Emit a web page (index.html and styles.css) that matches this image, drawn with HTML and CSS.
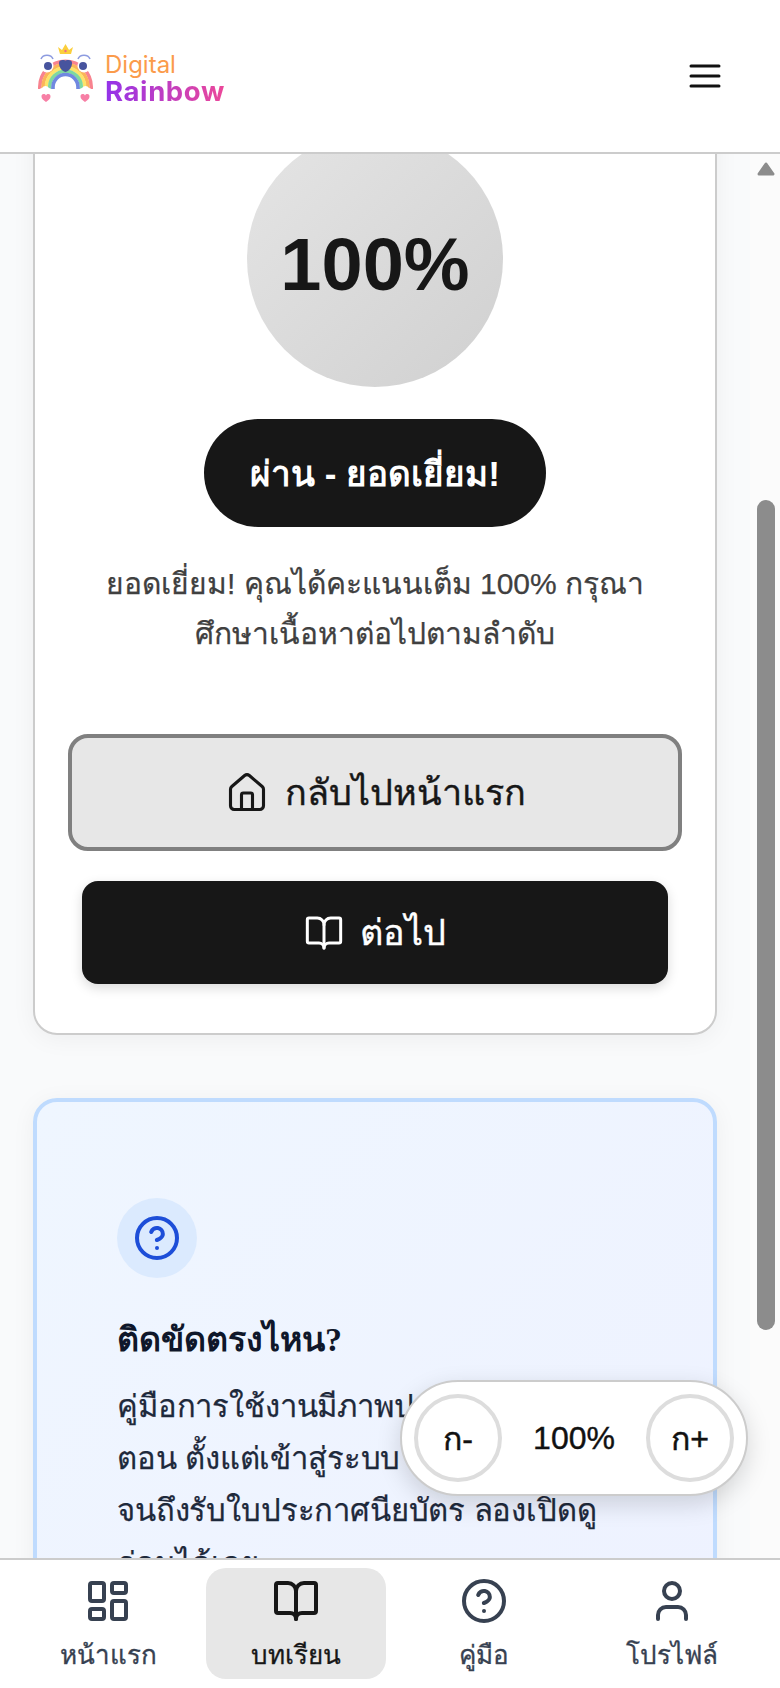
FILE: index.html
```html
<!DOCTYPE html>
<html lang="th">
<head>
    <meta charset="UTF-8">
    <meta name="viewport" content="width=device-width, initial-scale=1.0">
    <title>Digital Rainbow</title>
    <link rel="stylesheet" href="styles.css">
</head>
<body>
    <header class="topbar">
        <div class="logo">
            <svg class="logo-mark" width="56" height="60" viewBox="0 0 56 60">
                <path d="M22 11l-2-7 4 3 3.500-6 3.500 6 4-3-2 7z" fill="#fbcf3c"/>
                <circle cx="27.500" cy="8" r="1.200" fill="#ef6a8a"/>
                <g fill="none" stroke-width="3.600">
                    <path d="M1.800 46v-2a25.700 25.700 0 0 1 51.400 0v2" stroke="#f8838f"/>
                    <path d="M5.100 46v-2a22.400 22.400 0 0 1 44.800 0v2" stroke="#fbb45a"/>
                    <path d="M8.400 46v-2a19.100 19.100 0 0 1 38.200 0v2" stroke="#fde36a"/>
                    <path d="M11.700 46v-2a15.800 15.800 0 0 1 31.600 0v2" stroke="#7fd8a0"/>
                    <path d="M15 46v-2a12.500 12.500 0 0 1 25 0v2" stroke="#7088e0"/>
                </g>
                <path d="M27.500 29c-4-1-6.500-5-6.500-9 0-3 3-3.500 6.500-2.500 3.500-1 6.500-.5 6.500 2.500 0 4-2.500 8-6.500 9z" fill="#47549e"/>
                <circle cx="9" cy="23" r="6.500" fill="#fff"/>
                <circle cx="10" cy="23" r="4" fill="#47549e"/>
                <circle cx="46" cy="23" r="6.500" fill="#fff"/>
                <circle cx="45" cy="23" r="4" fill="#47549e"/>
                <path d="M3 16c2-5 10-5 12 0M40 16c2-5 10-5 12 0" fill="none" stroke="#8d9be0" stroke-width="1.600"/>
                <path d="M1 50a3.500 3.500 0 0 1 3-5 4 4 0 0 1 7 0 3 3 0 0 1 2 5zM42 50a3 3 0 0 1 2-5 4 4 0 0 1 7 0 3.500 3.500 0 0 1 3 5z" fill="#fff"/>
                <path d="M8 59c-3-2-4.500-3.500-4.500-5.500 0-3 3.500-3 4.500-1 1-2 4.500-2 4.500 1 0 2-1.500 3.500-4.500 5.500zM47 59c-3-2-4.500-3.500-4.500-5.500 0-3 3.500-3 4.500-1 1-2 4.500-2 4.500 1 0 2-1.500 3.500-4.500 5.500z" fill="#f77fa5"/>
            </svg>
            <div class="logo-text">
                <span class="logo-top">Digital</span>
                <span class="logo-bottom">Rainbow</span>
            </div>
        </div>
        <svg class="menu-icon" width="32" height="28" viewBox="0 0 32 28">
            <path d="M2 4h28M2 14h28M2 24h28" stroke="#111" stroke-width="3" stroke-linecap="round"/>
        </svg>
    </header>

    <div class="body-row">
        <main class="content">
            <section class="card result-card">
                <div class="score-circle">100%</div>
                <div class="status-pill">ผ่าน - ยอดเยี่ยม!</div>
                <p class="result-text">ยอดเยี่ยม! คุณได้คะแนนเต็ม 100% กรุณา<br>ศึกษาเนื้อหาต่อไปตามลำดับ</p>
                <a class="btn btn-home">
                    <svg width="44" height="44" viewBox="0 0 24 24" fill="none" stroke="currentColor" stroke-width="1.700" stroke-linecap="round" stroke-linejoin="round"><path d="M15 21v-8a1 1 0 0 0-1-1h-4a1 1 0 0 0-1 1v8"/><path d="M3 10a2 2 0 0 1 .709-1.528l7-5.999a2 2 0 0 1 2.582 0l7 5.999A2 2 0 0 1 21 10v9a2 2 0 0 1-2 2H5a2 2 0 0 1-2-2z"/></svg>
                    กลับไปหน้าแรก
                </a>
                <a class="btn btn-next">
                    <svg width="40" height="40" viewBox="0 0 24 24" fill="none" stroke="currentColor" stroke-width="1.800" stroke-linecap="round" stroke-linejoin="round"><path d="M12 7v14"/><path d="M3 18a1 1 0 0 1-1-1V4a1 1 0 0 1 1-1h5a4 4 0 0 1 4 4 4 4 0 0 1 4-4h5a1 1 0 0 1 1 1v13a1 1 0 0 1-1 1h-6a3 3 0 0 0-3 3 3 3 0 0 0-3-3z"/></svg>
                    ต่อไป
                </a>
            </section>

            <section class="card help-card">
                <div class="help-icon">
                    <svg width="48" height="48" viewBox="0 0 24 24" fill="none" stroke="currentColor" stroke-width="2" stroke-linecap="round" stroke-linejoin="round"><circle cx="12" cy="12" r="10"/><path d="M9.090 9a3 3 0 0 1 5.830 1c0 2-3 3-3 3"/><path d="M12 17h.01"/></svg>
                </div>
                <h3 class="help-title">ติดขัดตรงไหน?</h3>
                <p class="help-text">คู่มือการใช้งานมีภาพประกอบทุกขั้น<br>ตอน ตั้งแต่เข้าสู่ระบบ เรียน ทำแบบทดสอบ<br>จนถึงรับใบประกาศนียบัตร ลองเปิดดู<br>ก่อนได้เลย</p>
            </section>
        </main>

        <div class="scrollbar">
            <svg class="scroll-arrow" width="20" height="16" viewBox="0 0 20 16"><path d="M10 3L17 13H3z" fill="#8c8c8c" stroke="#8c8c8c" stroke-width="3" stroke-linejoin="round"/></svg>
            <span class="scroll-thumb"></span>
        </div>

        <div class="zoom-control">
            <button class="zoom-btn">ก-</button>
            <span class="zoom-value">100%</span>
            <button class="zoom-btn">ก+</button>
        </div>
    </div>

    <nav class="bottom-nav">
        <a class="nav-item">
            <svg width="48" height="48" viewBox="0 0 24 24" fill="none" stroke="currentColor" stroke-width="2" stroke-linejoin="round"><rect x="3" y="3" width="7" height="9" rx="1"/><rect x="14" y="3" width="7" height="5" rx="1"/><rect x="14" y="12" width="7" height="9" rx="1"/><rect x="3" y="16" width="7" height="5" rx="1"/></svg>
            <span>หน้าแรก</span>
        </a>
        <a class="nav-item active">
            <svg width="48" height="48" viewBox="0 0 24 24" fill="none" stroke="currentColor" stroke-width="2" stroke-linecap="round" stroke-linejoin="round"><path d="M12 7v14"/><path d="M3 18a1 1 0 0 1-1-1V4a1 1 0 0 1 1-1h5a4 4 0 0 1 4 4 4 4 0 0 1 4-4h5a1 1 0 0 1 1 1v13a1 1 0 0 1-1 1h-6a3 3 0 0 0-3 3 3 3 0 0 0-3-3z"/></svg>
            <span>บทเรียน</span>
        </a>
        <a class="nav-item">
            <svg width="48" height="48" viewBox="0 0 24 24" fill="none" stroke="currentColor" stroke-width="2" stroke-linecap="round" stroke-linejoin="round"><circle cx="12" cy="12" r="10"/><path d="M9.090 9a3 3 0 0 1 5.830 1c0 2-3 3-3 3"/><path d="M12 17h.01"/></svg>
            <span>คู่มือ</span>
        </a>
        <a class="nav-item">
            <svg width="48" height="48" viewBox="0 0 24 24" fill="none" stroke="currentColor" stroke-width="2" stroke-linecap="round" stroke-linejoin="round"><path d="M19 21v-2a4 4 0 0 0-4-4H9a4 4 0 0 0-4 4v2"/><circle cx="12" cy="7" r="4"/></svg>
            <span>โปรไฟล์</span>
        </a>
    </nav>
</body>
</html>
```

FILE: styles.css
```css
* {
    box-sizing: border-box;
}
html, body {
    margin: 0;
    height: 100%;
}
body {
    width: 780px;
    height: 1688px;
    display: flex;
    flex-direction: column;
    overflow: hidden;
    font-family: "Liberation Sans", sans-serif;
    background-color: #f9fafb;
    color: #171717;
}

.topbar {
    height: 154px;
    flex: none;
    display: flex;
    align-items: center;
    justify-content: space-between;
    padding: 0 59px 0 38px;
    background: #fff;
    border-bottom: 2px solid #ccc;
    position: relative;
    z-index: 2;
}
.logo {
    display: flex;
    align-items: center;
    gap: 11px;
    margin-top: -3px;
}
.logo-mark {
    margin-top: -4px;
}
.logo-text {
    display: flex;
    flex-direction: column;
    font-family: Inter, sans-serif;
    font-size: 24px;
    line-height: 26px;
    padding-top: 6px;
}
.logo-top {
    color: #fb9b4b;
}
.logo-bottom {
    font-size: 27.500px;
    font-weight: 700;
    letter-spacing: 0.6px;
    background: linear-gradient(90deg, #9333ea, #ec4899);
    -webkit-background-clip: text;
    background-clip: text;
    color: transparent;
}

.body-row {
    flex: 1;
    min-height: 0;
    display: flex;
    position: relative;
}
.content {
    flex: 1;
    min-width: 0;
    overflow: hidden;
    padding: 0 0 0 33px;
}
.scrollbar {
    width: 30px;
    flex: none;
    background: #fbfbfb;
    display: flex;
    flex-direction: column;
    align-items: center;
    padding: 7px 0 0 2px;
}
.scroll-thumb {
    width: 18px;
    height: 830px;
    margin-top: 323px;
    border-radius: 9px;
    background: #8c8c8c;
}

.card {
    width: 684px;
    border-radius: 24px;
    box-shadow: 0 4px 24px rgba(0, 0, 0, 0.05);
}
.result-card {
    margin-top: -186px;
    padding: 162px 35px 49px;
    background: #fff;
    border: 2px solid #ccc;
    border-top-width: 1px;
    display: flex;
    flex-direction: column;
    align-items: center;
}
.score-circle {
    width: 256px;
    height: 256px;
    flex: none;
    border-radius: 50%;
    display: flex;
    align-items: center;
    justify-content: center;
    padding-top: 10px;
    background: linear-gradient(135deg, #e5e5e5, #d0d0d0);
    font-size: 74px;
    font-weight: 700;
    color: #171717;
}
.status-pill {
    margin-top: 32px;
    width: 342px;
    height: 108px;
    border-radius: 54px;
    display: flex;
    align-items: center;
    justify-content: center;
    background: #171717;
    color: #fff;
    font-size: 35px;
    font-weight: 700;
}
.result-text {
    margin: 32px 0 0;
    font-size: 30px;
    line-height: 50px;
    text-align: center;
    color: #404040;
    -webkit-text-stroke: 0.25px currentColor;
}
.btn {
    display: flex;
    align-items: center;
    justify-content: center;
    gap: 16px;
    font-size: 36px;
    font-weight: 500;
    -webkit-text-stroke: 0.4px currentColor;
}
.btn-home {
    margin-top: 75px;
    width: 614px;
    height: 117px;
    border: 4px solid #808080;
    border-radius: 20px;
    background: #e7e7e7;
    color: #171717;
}
.btn-next {
    margin-top: 30px;
    width: 586px;
    height: 103px;
    border-radius: 16px;
    background: #171717;
    color: #fff;
    box-shadow: 0 4px 12px rgba(0, 0, 0, 0.15);
}

.help-card {
    margin-top: 63px;
    padding: 96px 80px 40px;
    border: 4px solid #bfdbfe;
    background: linear-gradient(135deg, #eff6ff, #eef2ff);
}
.help-icon {
    width: 80px;
    height: 80px;
    border-radius: 50%;
    display: flex;
    align-items: center;
    justify-content: center;
    background: #dbeafe;
    color: #1d4ed8;
}
.help-title {
    margin: 37px 0 0;
    font-family: "Liberation Serif", serif;
    font-size: 34px;
    line-height: 50px;
    font-weight: 700;
    color: #0f172a;
}
.help-text {
    margin: 16px 0 0;
    font-size: 31px;
    letter-spacing: -0.15px;
    line-height: 52.200px;
    white-space: nowrap;
    color: #1e293b;
    -webkit-text-stroke: 0.25px currentColor;
}

.zoom-control {
    position: absolute;
    left: 400px;
    top: 1226px;
    width: 348px;
    height: 116px;
    display: flex;
    align-items: center;
    justify-content: space-between;
    padding: 0 12px;
    border: 2px solid #ccc;
    border-radius: 58px;
    background: #fff;
    box-shadow: 0 8px 24px rgba(0, 0, 0, 0.15);
}
.zoom-btn {
    width: 88px;
    height: 88px;
    border: 4px solid #ddd;
    border-radius: 50%;
    background: #fff;
    font-family: inherit;
    font-size: 32px;
    font-weight: 500;
    color: #111;
    padding: 0;
    -webkit-text-stroke: 0.5px currentColor;
}
.zoom-value {
    font-size: 32px;
    font-weight: 500;
    color: #111;
    -webkit-text-stroke: 0.4px currentColor;
}

.bottom-nav {
    height: 130px;
    flex: none;
    display: flex;
    gap: 8px;
    padding: 8px 18px 9px;
    background: #fff;
    border-top: 2px solid #ccc;
    position: relative;
    z-index: 2;
}
.nav-item {
    flex: 1;
    display: flex;
    flex-direction: column;
    align-items: center;
    justify-content: center;
    gap: 12px;
    padding-top: 2px;
    border-radius: 20px;
    color: #374151;
    font-size: 26px;
    font-weight: 500;
    line-height: 36px;
    -webkit-text-stroke: 0.3px currentColor;
}
.nav-item.active {
    background: #e7e7e7;
    color: #171717;
}
```
